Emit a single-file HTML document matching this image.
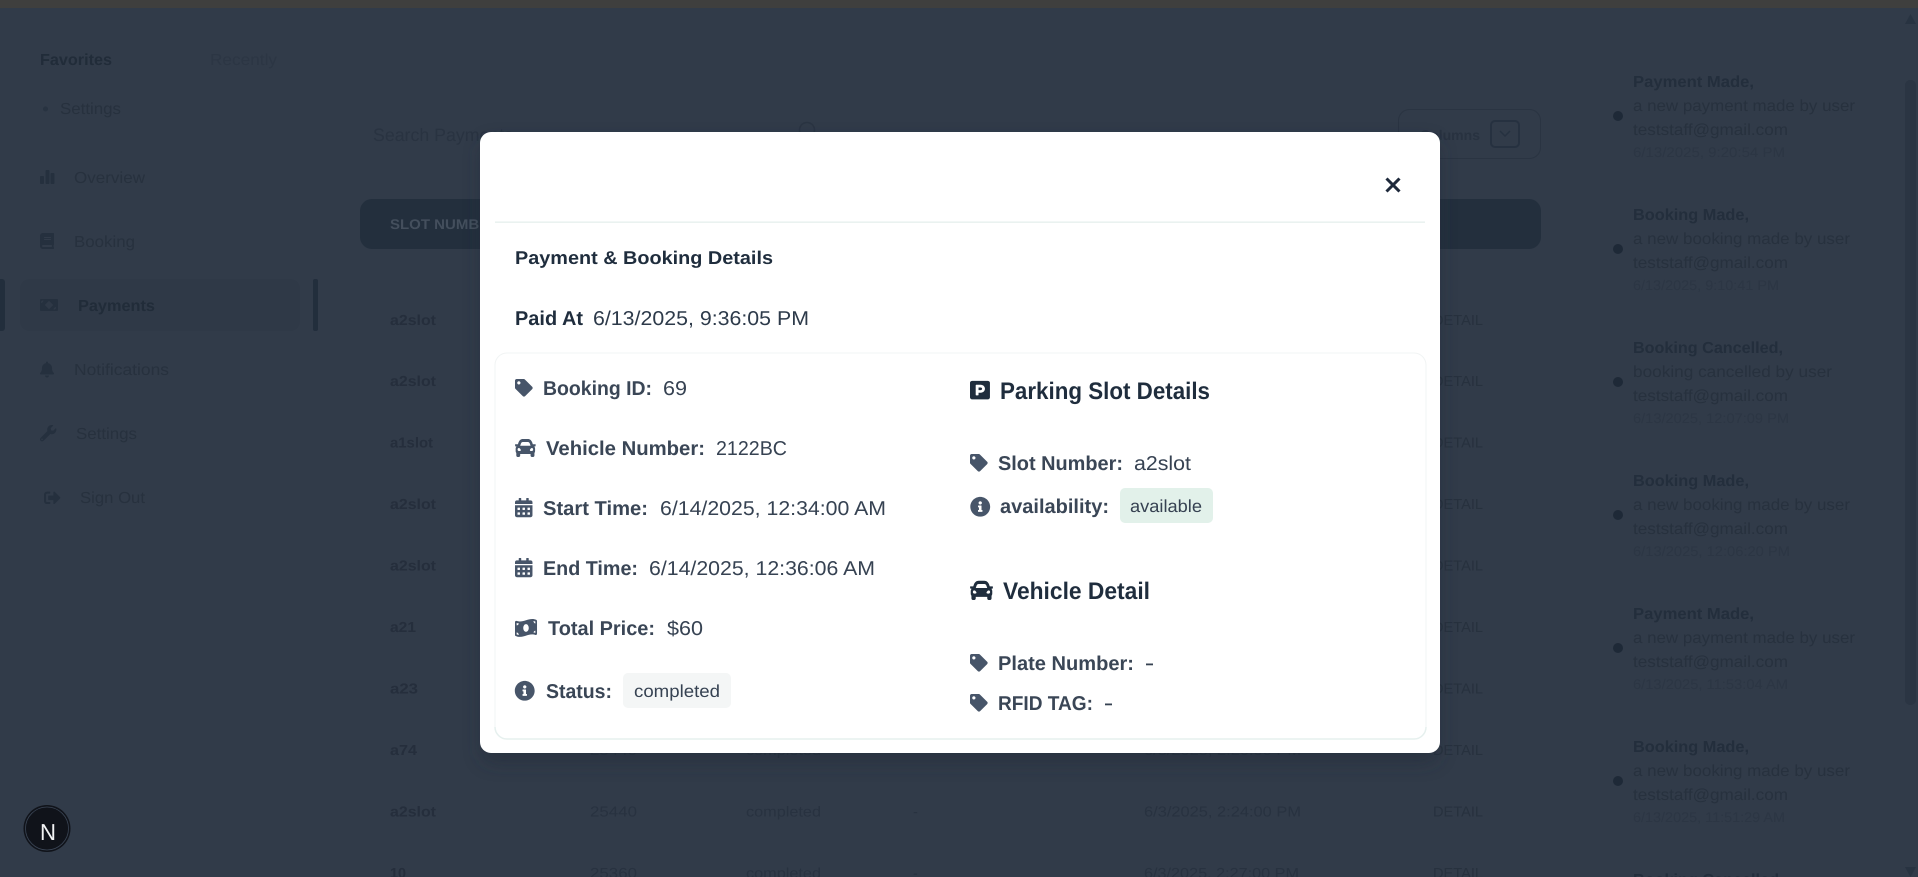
<!DOCTYPE html>
<html lang="en"><head><meta charset="utf-8"><title>Payments</title>
<style>
html,body{margin:0;padding:0;width:1918px;height:877px;overflow:hidden;background:#313b49}
svg{display:block;position:absolute;left:0;top:0}
text{font-family:"Liberation Sans",Arial,sans-serif;text-rendering:geometricPrecision}
.bg{fill:#27313e;font-size:16px}
.l{fill:#3a4656;font-size:20px;font-weight:700}
.v{fill:#364252;font-size:20px}
.i{fill:#475569}
.h{fill:#1f2d3d;font-weight:700}
</style></head><body>
<svg width="1918" height="877" viewBox="0 0 1918 877" xmlns="http://www.w3.org/2000/svg">
<defs>
<filter id="soft" x="-10%" y="-10%" width="120%" height="120%"><feGaussianBlur stdDeviation="9"/></filter>
<path id="tag" d="M0 252.118V48C0 21.49 21.49 0 48 0h204.118a48 48 0 0 1 33.941 14.059l211.882 211.882c18.745 18.745 18.745 49.137 0 67.882L293.823 497.941c-18.745 18.745-49.137 18.745-67.882 0L14.059 286.059A48 48 0 0 1 0 252.118zM112 64c-26.51 0-48 21.49-48 48s21.49 48 48 48 48-21.49 48-48-21.49-48-48-48z"/>
<path id="car" d="M499.99 176h-59.87l-16.64-41.6C406.38 91.63 365.57 64 319.5 64h-127c-46.06 0-86.88 27.63-103.99 70.4L71.87 176H12.01C4.2 176-1.53 183.34.37 190.91l6 24C7.7 220.25 12.5 224 18.01 224h20.07C24.65 235.73 16 252.78 16 272v48c0 16.12 6.16 30.67 16 41.93V416c0 17.67 14.33 32 32 32h32c17.67 0 32-14.33 32-32v-32h256v32c0 17.67 14.33 32 32 32h32c17.67 0 32-14.33 32-32v-54.07c9.84-11.25 16-25.8 16-41.93v-48c0-19.22-8.65-36.27-22.07-48H494c5.51 0 10.31-3.75 11.64-9.09l6-24c1.89-7.57-3.84-14.91-11.65-14.91zm-352.06-17.83c7.29-18.22 24.94-30.17 44.57-30.17h127c19.63 0 37.28 11.95 44.57 30.17L384 208H128l19.93-49.83zM96 319.8c-19.2 0-32-12.76-32-31.9S76.8 256 96 256s48 28.71 48 47.85-28.8 15.95-48 15.95zm320 0c-19.2 0-48 3.19-48-15.95S396.8 256 416 256s32 12.76 32 31.9-12.8 31.9-32 31.9z"/>
<path id="cal" d="M0 464c0 26.5 21.5 48 48 48h352c26.5 0 48-21.5 48-48V192H0v272zm320-196c0-6.6 5.4-12 12-12h40c6.6 0 12 5.4 12 12v40c0 6.6-5.4 12-12 12h-40c-6.6 0-12-5.4-12-12v-40zm0 128c0-6.6 5.4-12 12-12h40c6.6 0 12 5.4 12 12v40c0 6.6-5.4 12-12 12h-40c-6.6 0-12-5.4-12-12v-40zM192 268c0-6.6 5.4-12 12-12h40c6.6 0 12 5.4 12 12v40c0 6.6-5.4 12-12 12h-40c-6.6 0-12-5.4-12-12v-40zm0 128c0-6.6 5.4-12 12-12h40c6.6 0 12 5.4 12 12v40c0 6.6-5.4 12-12 12h-40c-6.6 0-12-5.4-12-12v-40zM64 268c0-6.6 5.4-12 12-12h40c6.6 0 12 5.4 12 12v40c0 6.6-5.4 12-12 12H76c-6.6 0-12-5.4-12-12v-40zm0 128c0-6.6 5.4-12 12-12h40c6.6 0 12 5.4 12 12v40c0 6.6-5.4 12-12 12H76c-6.6 0-12-5.4-12-12v-40zM400 64h-48V16c0-8.8-7.2-16-16-16h-32c-8.8 0-16 7.2-16 16v48H160V16c0-8.8-7.2-16-16-16h-32c-8.8 0-16 7.2-16 16v48H48C21.5 64 0 85.5 0 112v48h448v-48c0-26.5-21.5-48-48-48z"/>
<path id="info" d="M256 8C119.043 8 8 119.083 8 256c0 136.997 111.043 248 248 248s248-111.003 248-248C504 119.083 392.957 8 256 8zm0 110c23.196 0 42 18.804 42 42s-18.804 42-42 42-42-18.804-42-42 18.804-42 42-42zm56 254c0 6.627-5.373 12-12 12h-88c-6.627 0-12-5.373-12-12v-24c0-6.627 5.373-12 12-12h12v-64h-12c-6.627 0-12-5.373-12-12v-24c0-6.627 5.373-12 12-12h64c6.627 0 12 5.373 12 12v100h12c6.627 0 12 5.373 12 12v24z"/>
<path id="bill" d="M621.16 54.46C582.37 38.19 543.55 32 504.75 32c-123.17-.01-246.33 62.34-369.5 62.34-30.89 0-61.76-3.92-92.65-13.72-3.47-1.1-6.95-1.62-10.35-1.62C15.04 79 0 92.32 0 110.81v317.26c0 12.63 7.23 24.6 18.84 29.46C57.63 473.81 96.45 480 135.25 480c123.17 0 246.34-62.35 369.51-62.35 30.89 0 61.76 3.92 92.65 13.72 3.47 1.1 6.95 1.62 10.35 1.62 17.21 0 32.25-13.32 32.25-31.81V83.93c-.01-12.64-7.24-24.6-18.85-29.47zM48 132.22c20.12 5.04 41.12 7.57 62.72 8.93C104.84 170.54 79 192.69 48 192.69v-60.47zm0 285v-47.78c34.37 0 62.18 27.27 63.71 61.4-22.53-1.81-43.59-6.31-63.71-13.62zM320 352c-44.19 0-80-42.99-80-96 0-53.02 35.82-96 80-96s80 42.98 80 96c0 53.03-35.83 96-80 96zm272 27.78c-17.52-4.39-35.71-6.85-54.32-8.44 5.87-26.08 27.5-45.88 54.32-49.28v57.72zm0-236.11c-30.89-3.91-54.86-29.7-55.81-61.55 19.54 2.17 38.09 6.23 55.81 12.66v48.89z"/>
</defs>

<!-- top strip -->
<rect x="0" y="0" width="1918" height="8" fill="#3f3f3e"/>

<!-- sidebar -->
<text x="40" y="65" font-size="16" font-weight="700" fill="#212c39" textLength="72" lengthAdjust="spacingAndGlyphs">Favorites</text>
<text x="210" y="65" font-size="16" fill="#2c3644" textLength="67" lengthAdjust="spacingAndGlyphs">Recently</text>
<circle cx="45.5" cy="109" r="2.5" fill="#283341"/>
<text x="60" y="114" class="bg" textLength="61" lengthAdjust="spacingAndGlyphs">Settings</text>

<rect x="20" y="279" width="280" height="52" rx="10" fill="#2f3947"/>
<rect x="-5" y="279" width="10" height="52" rx="3" fill="#222e3c"/>
<rect x="313" y="279" width="5" height="52" rx="2" fill="#222e3c"/>

<g fill="#25303e">
<rect x="40" y="176" width="4" height="8" rx="1"/><rect x="45.5" y="170" width="4" height="14" rx="1"/><rect x="50.5" y="173" width="4" height="11" rx="1"/>
<path transform="translate(40 233) scale(.03125)" d="M448 360V24c0-13.3-10.7-24-24-24H96C43 0 0 43 0 96v320c0 53 43 96 96 96h328c13.3 0 24-10.7 24-24v-16c0-7.5-3.5-14.3-8.9-18.7-4.2-15.4-4.2-59.3 0-74.7 5.4-4.3 8.9-11.1 8.9-18.6zM128 134c0-3.3 2.7-6 6-6h212c3.3 0 6 2.7 6 6v20c0 3.3-2.7 6-6 6H134c-3.3 0-6-2.7-6-6v-20zm0 64c0-3.3 2.7-6 6-6h212c3.3 0 6 2.7 6 6v20c0 3.3-2.7 6-6 6H134c-3.3 0-6-2.7-6-6v-20zm253.4 250H96c-17.7 0-32-14.3-32-32 0-17.6 14.4-32 32-32h285.4c-1.9 17.1-1.9 46.9 0 64z"/>
<path fill-rule="evenodd" d="M41 299h16a1 1 0 0 1 1 1v10a1 1 0 0 1-1 1H41a1 1 0 0 1-1-1v-10a1 1 0 0 1 1-1zm8 1.8l-4.2 4.2 4.2 4.2 4.2-4.2zM42 300.5a1.5 1.5 0 0 1-1 1V303a3 3 0 0 0 2.5-2.5zM56 307a3 3 0 0 0-2.5 2.5H55a1.5 1.5 0 0 1 1-1z"/>
<path transform="translate(40 361.5) scale(.03125)" d="M224 512c35.32 0 63.97-28.65 63.97-64H160.03c0 35.35 28.65 64 63.97 64zm215.39-149.71c-19.32-20.76-55.47-51.99-55.47-154.29 0-77.7-54.48-139.9-127.94-155.16V32c0-17.67-14.32-32-31.98-32s-31.98 14.33-31.98 32v20.84C118.56 68.1 64.08 130.3 64.08 208c0 102.3-36.15 133.53-55.47 154.29-6 6.45-8.66 14.16-8.61 21.71.11 16.4 12.98 32 32.1 32h383.8c19.12 0 32-15.6 32.1-32 .05-7.55-2.61-15.27-8.61-21.71z"/>
<path transform="translate(40 425) scale(.032)" d="M507.73 109.1c-2.24-9.03-13.54-12.09-20.12-5.51l-74.36 74.36-67.88-11.31-11.31-67.88 74.36-74.36c6.62-6.62 3.43-17.9-5.66-20.16-47.38-11.74-99.55.91-136.58 37.93-39.64 39.64-50.55 97.1-34.05 147.2L18.74 402.76c-24.99 24.99-24.99 65.51 0 90.5 24.99 24.99 65.51 24.99 90.5 0l213.21-213.21c50.12 16.71 107.47 5.68 147.37-34.22 37.07-37.07 49.7-89.32 37.91-136.73zM64 472c-13.25 0-24-10.75-24-24 0-13.26 10.75-24 24-24s24 10.74 24 24c0 13.25-10.75 24-24 24z"/>
<path transform="translate(44 489.5) scale(.0325)" d="M497 273L329 441c-15 15-41 4.5-41-17v-96H152c-13.3 0-24-10.7-24-24v-96c0-13.3 10.7-24 24-24h136V88c0-21.4 25.9-32 41-17l168 168c9.3 9.4 9.3 24.6 0 34zM192 436v-40c0-6.6-5.4-12-12-12H96c-17.7 0-32-14.3-32-32V160c0-17.7 14.3-32 32-32h84c6.6 0 12-5.4 12-12V76c0-6.6-5.4-12-12-12H96c-53 0-96 43-96 96v192c0 53 43 96 96 96h84c6.6 0 12-5.4 12-12z"/>
</g>
<text x="74" y="183" class="bg" textLength="71" lengthAdjust="spacingAndGlyphs">Overview</text>
<text x="74" y="247" class="bg" textLength="61" lengthAdjust="spacingAndGlyphs">Booking</text>
<text x="78" y="311" font-size="16" font-weight="700" fill="#212c39" textLength="77" lengthAdjust="spacingAndGlyphs">Payments</text>
<text x="74" y="375" class="bg" textLength="95" lengthAdjust="spacingAndGlyphs">Notifications</text>
<text x="76" y="439" class="bg" textLength="61" lengthAdjust="spacingAndGlyphs">Settings</text>
<text x="80" y="503" class="bg" textLength="65" lengthAdjust="spacingAndGlyphs">Sign Out</text>

<!-- toolbar -->
<text x="373" y="141" font-size="18" fill="#293341" textLength="140" lengthAdjust="spacingAndGlyphs">Search Payments</text>
<circle cx="807" cy="130" r="7.5" fill="none" stroke="#2a3442" stroke-width="1.5"/>
<rect x="1398.5" y="109.5" width="142" height="49" rx="11" fill="none" stroke="#2a3442"/>
<text x="1420" y="140" font-size="14" font-weight="700" fill="#283240" textLength="60" lengthAdjust="spacingAndGlyphs">Columns</text>
<rect x="1491" y="121" width="28" height="26" rx="4" fill="none" stroke="#263140" stroke-width="2"/>
<path d="M1500 131l5 5 5-5" fill="none" stroke="#263140" stroke-width="1.5"/>

<!-- table -->
<rect x="360" y="199" width="1181" height="50" rx="12" fill="#232f3d"/>
<text x="390" y="229" font-size="14" font-weight="700" fill="#444f5d" textLength="110" lengthAdjust="spacingAndGlyphs">SLOT NUMBER</text>

<g font-size="14.5" font-weight="700" fill="#252e3c">
<text x="390" y="325" textLength="46" lengthAdjust="spacingAndGlyphs">a2slot</text>
<text x="390" y="386" textLength="46" lengthAdjust="spacingAndGlyphs">a2slot</text>
<text x="390" y="447.5" textLength="43" lengthAdjust="spacingAndGlyphs">a1slot</text>
<text x="390" y="509" textLength="46" lengthAdjust="spacingAndGlyphs">a2slot</text>
<text x="390" y="570.5" textLength="46" lengthAdjust="spacingAndGlyphs">a2slot</text>
<text x="390" y="632" textLength="26" lengthAdjust="spacingAndGlyphs">a21</text>
<text x="390" y="693.5" textLength="28" lengthAdjust="spacingAndGlyphs">a23</text>
<text x="390" y="755" textLength="27" lengthAdjust="spacingAndGlyphs">a74</text>
<text x="390" y="816.5" textLength="46" lengthAdjust="spacingAndGlyphs">a2slot</text>
<text x="390" y="878" textLength="16" lengthAdjust="spacingAndGlyphs">10</text>
</g>
<g font-size="14.5" fill="#283240">
<text x="590" y="816.5" textLength="47" lengthAdjust="spacingAndGlyphs">25440</text>
<text x="746" y="816.5" textLength="75" lengthAdjust="spacingAndGlyphs">completed</text>
<text x="913" y="816.5">-</text>
<text x="1144" y="816.5" textLength="157" lengthAdjust="spacingAndGlyphs">6/3/2025, 2:24:00 PM</text>
<text x="590" y="878" textLength="47" lengthAdjust="spacingAndGlyphs">25360</text>
<text x="746" y="878" textLength="75" lengthAdjust="spacingAndGlyphs">completed</text>
<text x="913" y="878">-</text>
<text x="1144" y="878" textLength="155" lengthAdjust="spacingAndGlyphs">6/3/2025, 2:27:00 PM</text>
<text x="1144" y="755" textLength="157" lengthAdjust="spacingAndGlyphs">6/3/2025, 2:20:00 PM</text>
<text x="590" y="755" textLength="47" lengthAdjust="spacingAndGlyphs">25440</text>
<text x="746" y="755" textLength="75" lengthAdjust="spacingAndGlyphs">completed</text>
</g>
<g font-size="14.5" fill="#27313e">
<text x="1433" y="325" textLength="50" lengthAdjust="spacingAndGlyphs">DETAIL</text>
<text x="1433" y="386" textLength="50" lengthAdjust="spacingAndGlyphs">DETAIL</text>
<text x="1433" y="447.5" textLength="50" lengthAdjust="spacingAndGlyphs">DETAIL</text>
<text x="1433" y="509" textLength="50" lengthAdjust="spacingAndGlyphs">DETAIL</text>
<text x="1433" y="570.5" textLength="50" lengthAdjust="spacingAndGlyphs">DETAIL</text>
<text x="1433" y="632" textLength="50" lengthAdjust="spacingAndGlyphs">DETAIL</text>
<text x="1433" y="693.5" textLength="50" lengthAdjust="spacingAndGlyphs">DETAIL</text>
<text x="1433" y="755" textLength="50" lengthAdjust="spacingAndGlyphs">DETAIL</text>
<text x="1433" y="816.5" textLength="50" lengthAdjust="spacingAndGlyphs">DETAIL</text>
<text x="1433" y="878" textLength="50" lengthAdjust="spacingAndGlyphs">DETAIL</text>
</g>

<!-- notifications -->
<g fill="#1e2937">
<circle cx="1618" cy="116" r="5"/><circle cx="1618" cy="249" r="5"/><circle cx="1618" cy="382" r="5"/><circle cx="1618" cy="515" r="5"/><circle cx="1618" cy="648" r="5"/><circle cx="1618" cy="781" r="5"/>
</g>
<g font-size="16" font-weight="700" fill="#232e3c">
<text x="1633" y="87" textLength="121" lengthAdjust="spacingAndGlyphs">Payment Made,</text>
<text x="1633" y="220" textLength="116" lengthAdjust="spacingAndGlyphs">Booking Made,</text>
<text x="1633" y="353" textLength="150" lengthAdjust="spacingAndGlyphs">Booking Cancelled,</text>
<text x="1633" y="486" textLength="116" lengthAdjust="spacingAndGlyphs">Booking Made,</text>
<text x="1633" y="619" textLength="121" lengthAdjust="spacingAndGlyphs">Payment Made,</text>
<text x="1633" y="752" textLength="116" lengthAdjust="spacingAndGlyphs">Booking Made,</text>
<text x="1633" y="885" textLength="146" lengthAdjust="spacingAndGlyphs">Booking Cancelled</text>
</g>
<g font-size="16" fill="#27313e">
<text x="1633" y="111" textLength="222" lengthAdjust="spacingAndGlyphs">a new payment made by user</text>
<text x="1633" y="135" textLength="155" lengthAdjust="spacingAndGlyphs">teststaff@gmail.com</text>
<text x="1633" y="244" textLength="217" lengthAdjust="spacingAndGlyphs">a new booking made by user</text>
<text x="1633" y="268" textLength="155" lengthAdjust="spacingAndGlyphs">teststaff@gmail.com</text>
<text x="1633" y="377" textLength="199" lengthAdjust="spacingAndGlyphs">booking cancelled by user</text>
<text x="1633" y="401" textLength="155" lengthAdjust="spacingAndGlyphs">teststaff@gmail.com</text>
<text x="1633" y="510" textLength="217" lengthAdjust="spacingAndGlyphs">a new booking made by user</text>
<text x="1633" y="534" textLength="155" lengthAdjust="spacingAndGlyphs">teststaff@gmail.com</text>
<text x="1633" y="643" textLength="222" lengthAdjust="spacingAndGlyphs">a new payment made by user</text>
<text x="1633" y="667" textLength="155" lengthAdjust="spacingAndGlyphs">teststaff@gmail.com</text>
<text x="1633" y="776" textLength="217" lengthAdjust="spacingAndGlyphs">a new booking made by user</text>
<text x="1633" y="800" textLength="155" lengthAdjust="spacingAndGlyphs">teststaff@gmail.com</text>
</g>
<g font-size="14" fill="#2c3644">
<text x="1633" y="157" textLength="152" lengthAdjust="spacingAndGlyphs">6/13/2025, 9:20:54 PM</text>
<text x="1633" y="290" textLength="146" lengthAdjust="spacingAndGlyphs">6/13/2025, 9:10:41 PM</text>
<text x="1633" y="423" textLength="156" lengthAdjust="spacingAndGlyphs">6/13/2025, 12:07:09 PM</text>
<text x="1633" y="556" textLength="157" lengthAdjust="spacingAndGlyphs">6/13/2025, 12:06:20 PM</text>
<text x="1633" y="689" textLength="155" lengthAdjust="spacingAndGlyphs">6/13/2025, 11:53:04 AM</text>
<text x="1633" y="822" textLength="152" lengthAdjust="spacingAndGlyphs">6/13/2025, 11:51:29 AM</text>
</g>

<!-- scrollbar -->
<path d="M1910.5 14l5.5 10h-11z" fill="#283341"/>
<rect x="1905" y="80" width="11" height="625" rx="5" fill="#2b3543"/>
<path d="M1910.5 877l-5.5-10h11z" fill="#283341"/>

<!-- next badge -->
<circle cx="47" cy="828.5" r="23.5" fill="#10131a"/>
<circle cx="47" cy="828.5" r="21.5" fill="none" stroke="#3b4656" stroke-width=".8"/>
<text x="40" y="840" font-size="23" fill="#f2f3f4" textLength="16" lengthAdjust="spacingAndGlyphs">N</text>

<!-- modal -->
<rect x="482" y="142" width="956" height="620" rx="12" fill="#222c39" opacity=".55" filter="url(#soft)"/>
<rect x="480" y="132" width="960" height="621" rx="11" fill="#fff"/>
<path d="M1386.5 178.5l13 13M1399.5 178.5l-13 13" stroke="#1e293b" stroke-width="3" fill="none"/>
<rect x="495" y="221.5" width="930" height="1.3" fill="#e4efec"/>

<text x="515" y="264" font-size="18.5" class="h" textLength="258" lengthAdjust="spacingAndGlyphs">Payment &amp; Booking Details</text>
<text x="515" y="325" font-size="20" class="h" textLength="68" lengthAdjust="spacingAndGlyphs">Paid At</text>
<text x="593" y="325" font-size="20" fill="#2d3a4a" textLength="216" lengthAdjust="spacingAndGlyphs">6/13/2025, 9:36:05 PM</text>

<rect x="495" y="353" width="931" height="386" rx="12" fill="#fff" stroke="#f1f4f4"/>
<path d="M495 727a12 12 0 0 0 12 12h907a12 12 0 0 0 12-12" fill="none" stroke="#e6f0ee" stroke-width="1.5"/>

<!-- left col -->
<use href="#tag" class="i" transform="translate(515 379) scale(.0345)"/>
<use href="#car" class="i" transform="translate(515 436) scale(.0405 .0469)"/>
<use href="#cal" class="i" transform="translate(515 498) scale(.039 .0375)"/>
<use href="#cal" class="i" transform="translate(515 558) scale(.039 .0375)"/>
<use href="#bill" class="i" transform="translate(515 617.7) scale(.0344 .04)"/>
<use href="#info" class="i" transform="translate(514.5 680.5) scale(.04)"/>

<text x="543" y="395" class="l" textLength="109" lengthAdjust="spacingAndGlyphs">Booking ID:</text>
<text x="663" y="395" class="v" textLength="24" lengthAdjust="spacingAndGlyphs">69</text>
<text x="546" y="455" class="l" textLength="159" lengthAdjust="spacingAndGlyphs">Vehicle Number:</text>
<text x="716" y="455" class="v" textLength="71" lengthAdjust="spacingAndGlyphs">2122BC</text>
<text x="543" y="515" class="l" textLength="105" lengthAdjust="spacingAndGlyphs">Start Time:</text>
<text x="660" y="515" class="v" textLength="226" lengthAdjust="spacingAndGlyphs">6/14/2025, 12:34:00 AM</text>
<text x="543" y="575" class="l" textLength="95" lengthAdjust="spacingAndGlyphs">End Time:</text>
<text x="649" y="575" class="v" textLength="226" lengthAdjust="spacingAndGlyphs">6/14/2025, 12:36:06 AM</text>
<text x="548" y="635" class="l" textLength="107" lengthAdjust="spacingAndGlyphs">Total Price:</text>
<text x="667" y="635" class="v" textLength="36" lengthAdjust="spacingAndGlyphs">$60</text>
<text x="546" y="698" class="l" textLength="66" lengthAdjust="spacingAndGlyphs">Status:</text>
<rect x="623" y="673" width="108" height="35" rx="5" fill="#f4f6f6"/>
<text x="634" y="697" font-size="17.5" fill="#364252" textLength="86" lengthAdjust="spacingAndGlyphs">completed</text>

<!-- right col -->
<path fill="#1f2d3d" transform="translate(970 379.5) scale(.0445 .0415)" d="M400 32H48C21.5 32 0 53.5 0 80v352c0 26.5 21.5 48 48 48h352c26.5 0 48-21.5 48-48V80c0-26.5-21.5-48-48-48zM240 320h-48v48c0 8.8-7.2 16-16 16h-32c-8.8 0-16-7.2-16-16V144c0-8.8 7.2-16 16-16h96c52.9 0 96 43.1 96 96s-43.1 96-96 96zm0-128h-48v64h48c17.6 0 32-14.4 32-32s-14.4-32-32-32z"/>
<text x="1000" y="399" font-size="24" class="h" textLength="210" lengthAdjust="spacingAndGlyphs">Parking Slot Details</text>
<use href="#tag" class="i" transform="translate(970 454) scale(.0345)"/>
<text x="998" y="470" class="l" textLength="125" lengthAdjust="spacingAndGlyphs">Slot Number:</text>
<text x="1134" y="470" class="v" textLength="57" lengthAdjust="spacingAndGlyphs">a2slot</text>
<use href="#info" class="i" transform="translate(970 496.5) scale(.04)"/>
<text x="1000" y="513" class="l" textLength="109" lengthAdjust="spacingAndGlyphs">availability:</text>
<rect x="1120" y="488" width="93" height="35" rx="5" fill="#e2f1ea"/>
<text x="1130" y="512" font-size="17.5" fill="#364252" textLength="72" lengthAdjust="spacingAndGlyphs">available</text>

<use href="#car" fill="#1f2d3d" transform="translate(970 577.5) scale(.0449 .0503)"/>
<text x="1003" y="599" font-size="24" class="h" textLength="147" lengthAdjust="spacingAndGlyphs">Vehicle Detail</text>
<use href="#tag" class="i" transform="translate(970 654) scale(.0345)"/>
<text x="998" y="670" class="l" textLength="136" lengthAdjust="spacingAndGlyphs">Plate Number:</text>
<rect x="1146" y="663.5" width="7" height="1.8" fill="#364252"/>
<use href="#tag" class="i" transform="translate(970 694) scale(.0345)"/>
<text x="998" y="710" class="l" textLength="95" lengthAdjust="spacingAndGlyphs">RFID TAG:</text>
<rect x="1105" y="703.5" width="7" height="1.8" fill="#364252"/>
</svg>
</body></html>
